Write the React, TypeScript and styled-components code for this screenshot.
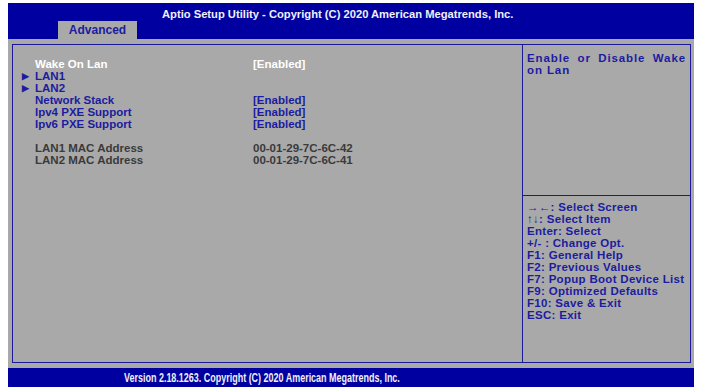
import React from "react";
import styled, { createGlobalStyle } from "styled-components";

const Global = createGlobalStyle`
  html, body { margin: 0; padding: 0; background: #ffffff; }
  body { font-family: "Liberation Sans", Arial, sans-serif; font-weight: bold; }
`;

const Screen = styled.div`
  width: 686px;
  margin: 3px 0 0 8px;
  display: flex;
  flex-direction: column;
`;

const Header = styled.div`
  height: 36px;
  background: #0000a0;
  display: flex;
  flex-direction: column;
`;

const Title = styled.div`
  color: #f0f0f8;
  font-size: 11.2px;
  line-height: 14px;
  padding: 4px 0 0 154px;
  white-space: nowrap;
`;

const TabRow = styled.div`
  margin-top: auto;
  display: flex;
  padding-left: 50px;
`;

const Tab = styled.div`
  width: 79px;
  height: 18px;
  background: #a9a9a9;
  color: #1c1ca0;
  font-size: 12px;
  line-height: 19px;
  text-align: center;
`;

const Body = styled.div`
  background: #a9a9a9;
  height: 329px;
  padding: 5px 3px 5px 4px;
  box-sizing: border-box;
  display: flex;
`;

const Frame = styled.div`
  flex: 1;
  border: 1px solid #1a1a98;
  display: flex;
`;

const Main = styled.div`
  width: 510px;
  border-right: 1px solid #1a1a98;
  padding: 13px 0 0 9px;
  box-sizing: border-box;
`;

const Row = styled.div`
  display: flex;
  height: 12px;
  line-height: 12px;
  font-size: 11.5px;
`;

const Arrow = styled.span<{ $c: string }>`
  width: 13px;
  color: ${(p) => p.$c};
  font-size: 9px;
`;

const Label = styled.span<{ $c: string }>`
  width: 218px;
  color: ${(p) => p.$c};
  white-space: nowrap;
`;

const Value = styled.span<{ $c: string }>`
  color: ${(p) => p.$c};
  white-space: nowrap;
`;

const Side = styled.div`
  flex: 1;
  display: flex;
  flex-direction: column;
`;

const HelpTop = styled.div`
  height: 151px;
  border-bottom: 1px solid #1a1a98;
  padding: 7px 4px 0 4px;
  box-sizing: border-box;
  color: #1c1ca0;
  font-size: 11.5px;
  line-height: 12px;
  text-align: justify;
  letter-spacing: 0.9px;
`;

const Keys = styled.div`
  padding: 5px 0 0 4px;
  color: #1c1ca0;
  font-size: 11.5px;
  line-height: 12px;
  letter-spacing: 0.3px;
  white-space: nowrap;
`;

const Footer = styled.div`
  height: 19px;
  background: #0000a0;
  padding-left: 116px;
  white-space: nowrap;
`;

const FooterText = styled.span`
  display: inline-block;
  color: #f0f0f8;
  font-size: 13px;
  line-height: 19px;
  transform: scaleX(0.69);
  transform-origin: left center;
`;

const BLUE = "#1c1ca0";
const GRAY = "#3a3a3a";
const WHITE = "#ffffff";

type Item = { arrow?: boolean; label: string; value?: string; lc: string; vc?: string };

const items: Item[] = [
  { label: "Wake On Lan", value: "[Enabled]", lc: WHITE, vc: WHITE },
  { arrow: true, label: "LAN1", lc: BLUE },
  { arrow: true, label: "LAN2", lc: BLUE },
  { label: "Network Stack", value: "[Enabled]", lc: BLUE, vc: BLUE },
  { label: "Ipv4 PXE Support", value: "[Enabled]", lc: BLUE, vc: BLUE },
  { label: "Ipv6 PXE Support", value: "[Enabled]", lc: BLUE, vc: BLUE },
  { label: "", lc: BLUE },
  { label: "LAN1 MAC Address", value: "00-01-29-7C-6C-42", lc: GRAY, vc: GRAY },
  { label: "LAN2 MAC Address", value: "00-01-29-7C-6C-41", lc: GRAY, vc: GRAY },
];

const keys = [
  "\u2192\u2190: Select Screen",
  "\u2191\u2193: Select Item",
  "Enter: Select",
  "+/- : Change Opt.",
  "F1: General Help",
  "F2: Previous Values",
  "F7: Popup Boot Device List",
  "F9: Optimized Defaults",
  "F10: Save & Exit",
  "ESC: Exit",
];

export default function App() {
  return (
    <>
      <Global />
      <Screen>
        <Header>
          <Title>Aptio Setup Utility - Copyright (C) 2020 American Megatrends, Inc.</Title>
          <TabRow>
            <Tab>Advanced</Tab>
          </TabRow>
        </Header>
        <Body>
          <Frame>
            <Main>
              {items.map((it, i) => (
                <Row key={i}>
                  <Arrow $c={it.lc}>{it.arrow ? "\u25B6" : ""}</Arrow>
                  <Label $c={it.lc}>{it.label}</Label>
                  {it.value && <Value $c={it.vc || it.lc}>{it.value}</Value>}
                </Row>
              ))}
            </Main>
            <Side>
              <HelpTop>Enable or Disable Wake on Lan</HelpTop>
              <Keys>
                {keys.map((k) => (
                  <div key={k}>{k}</div>
                ))}
              </Keys>
            </Side>
          </Frame>
        </Body>
        <Footer>
          <FooterText>Version 2.18.1263. Copyright (C) 2020 American Megatrends, Inc.</FooterText>
        </Footer>
      </Screen>
    </>
  );
}
